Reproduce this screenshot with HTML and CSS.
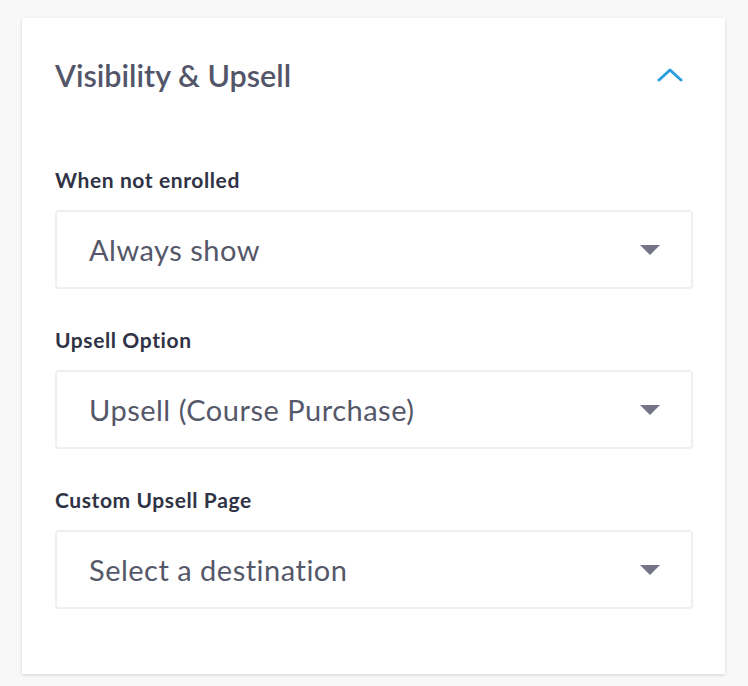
FILE: index.html
```html
<!DOCTYPE html>
<html>
<head>
<meta charset="utf-8">
<link rel="stylesheet" href="styles.css">
</head>
<body>
<div class="page">
  <section class="card">
    <header class="card-header">
      <h2 class="card-title">Visibility &amp; Upsell</h2>
      <button class="collapse-btn" aria-label="Collapse">
        <svg width="26" height="14" viewBox="0 0 26 14"><path d="M2 12 L13 2 L24 12" fill="none" stroke="#2a9ee0" stroke-width="3" stroke-linecap="round" stroke-linejoin="round"/></svg>
      </button>
    </header>
    <div class="field">
      <label class="field-label">When not enrolled</label>
      <div class="select"><span class="select-value">Always show</span><span class="caret"></span></div>
    </div>
    <div class="field">
      <label class="field-label">Upsell Option</label>
      <div class="select"><span class="select-value">Upsell (Course Purchase)</span><span class="caret"></span></div>
    </div>
    <div class="field">
      <label class="field-label">Custom Upsell Page</label>
      <div class="select"><span class="select-value">Select a destination</span><span class="caret"></span></div>
    </div>
  </section>
</div>
</body>
</html>
```
FILE: styles.css
```css
html, body {
  margin: 0;
  padding: 0;
  background: #f8f8f8;
  font-family: Lato, "Open Sans", sans-serif;
}
.page {
  padding: 18px 23px 12px 22px;
}
.card {
  background: #fff;
  box-shadow: 0 1px 3px rgba(0, 0, 0, 0.16);
  padding: 39px 32px 65px 33px;
}
.card-header {
  display: flex;
  align-items: center;
  justify-content: space-between;
  height: 36px;
  margin-bottom: 75px;
}
.card-title {
  margin: 0;
  font-size: 30.5px;
  font-weight: 600;
  color: #535669;
  line-height: 36px;
}
.collapse-btn {
  border: 0;
  background: none;
  padding: 0;
  margin-right: 10px;
  display: flex;
}
.field {
  display: flex;
  flex-direction: column;
  margin-bottom: 39px;
}
.field:last-child {
  margin-bottom: 0;
}
.field-label {
  font-size: 21px;
  font-weight: 700;
  letter-spacing: 0.6px;
  color: #2f3345;
  line-height: 24px;
  margin-bottom: 18px;
}
.select {
  display: flex;
  align-items: center;
  justify-content: space-between;
  height: 75px;
  border: 2px solid #efeff1;
  border-radius: 4px;
  padding: 0 31px 0 32px;
}
.select-value {
  font-size: 29px;
  letter-spacing: 0.5px;
  color: #555869;
}
.caret {
  width: 0;
  height: 0;
  border-left: 10px solid transparent;
  border-right: 10px solid transparent;
  border-top: 10px solid #737586;
}
```
